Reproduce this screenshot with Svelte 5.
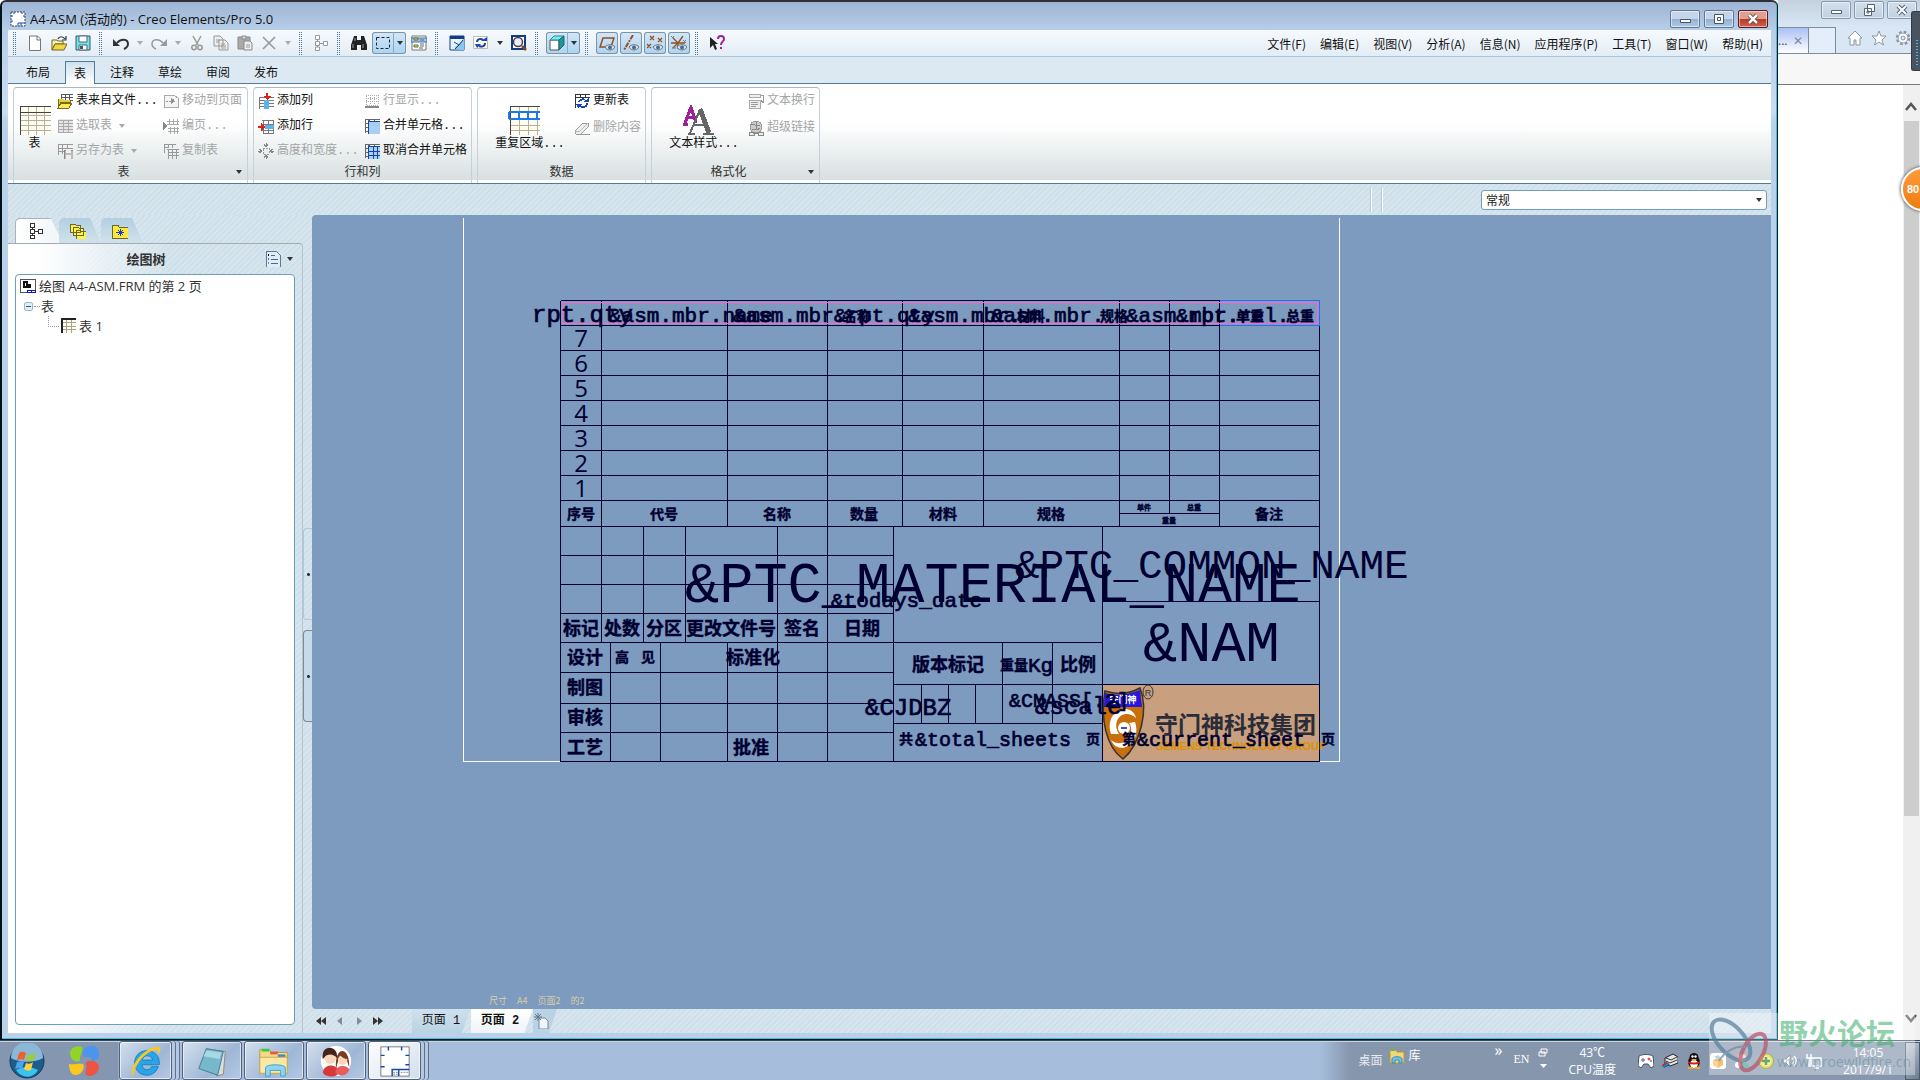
<script lang="ts">
  interface Label {
    x: number;
    y: number;
    size: number;
    text: string;
  }

  const menus = ["文件(F)", "编辑(E)", "视图(V)", "分析(A)", "信息(N)", "应用程序(P)", "工具(T)", "窗口(W)", "帮助(H)"];
  const ribbonTabs = ["布局", "表", "注释", "草绘", "审阅", "发布"];

  let activeTab = $state("表");
  let activePage = $state(2);
  let view = $state("常规");

  // Title block, in pixels from the upper left corner of the parts list.
  const rows = [7, 6, 5, 4, 3, 2, 1];

  // [x1, y1, x2, y2]
  const lines = [
    ...[0, 25, 50, 75, 100, 125, 150, 175, 200, 226].map((y) => [0, y, 759, y]),
    ...[0, 267, 759].map((x) => [x, 0, x, 461]),
    ...[167, 342, 423, 559, 659].map((x) => [x, 0, x, 226]),
    [41, 0, 41, 342],
    [609, 0, 609, 213],
    [559, 213, 659, 213],
    ...[255, 284, 313].map((y) => [0, y, 333, y]),
    ...[83, 125].map((x) => [x, 226, x, 342]),
    [217, 226, 217, 461],
    [333, 226, 333, 461],
    [542, 226, 542, 461],
    [0, 342, 542, 342],
    ...[50, 100, 167].map((x) => [x, 342, x, 461]),
    ...[372, 403, 432].map((y) => [0, y, 333, y]),
    [542, 301, 759, 301],
    [333, 384, 759, 384],
    [333, 423, 542, 423],
    ...[361, 388, 415].map((x) => [x, 384, x, 423]),
    ...[442, 492].map((x) => [x, 342, x, 423]),
    [0, 461, 759, 461],
  ];

  const captions: Label[] = [
    { x: 21, y: 219, size: 14, text: "序号" },
    { x: 104, y: 219, size: 14, text: "代号" },
    { x: 217, y: 219, size: 14, text: "名称" },
    { x: 304, y: 219, size: 14, text: "数量" },
    { x: 383, y: 219, size: 14, text: "材料" },
    { x: 491, y: 219, size: 14, text: "规格" },
    { x: 709, y: 219, size: 14, text: "备注" },
    { x: 584, y: 210, size: 7, text: "单件" },
    { x: 634, y: 210, size: 7, text: "总重" },
    { x: 609, y: 223, size: 7, text: "重量" },
    { x: 21, y: 335, size: 18, text: "标记" },
    { x: 62, y: 335, size: 18, text: "处数" },
    { x: 104, y: 335, size: 18, text: "分区" },
    { x: 171, y: 335, size: 18, text: "更改文件号" },
    { x: 242, y: 335, size: 18, text: "签名" },
    { x: 302, y: 335, size: 18, text: "日期" },
    { x: 25, y: 364, size: 18, text: "设计" },
    { x: 62, y: 362, size: 14, text: "高" },
    { x: 88, y: 362, size: 14, text: "见" },
    { x: 193, y: 364, size: 18, text: "标准化" },
    { x: 25, y: 394, size: 18, text: "制图" },
    { x: 25, y: 424, size: 18, text: "审核" },
    { x: 25, y: 454, size: 18, text: "工艺" },
    { x: 191, y: 454, size: 18, text: "批准" },
    { x: 388, y: 371, size: 18, text: "版本标记" },
    { x: 454, y: 370, size: 14, text: "重量" },
    { x: 518, y: 371, size: 18, text: "比例" },
    { x: 297, y: 21, size: 14, text: "名称" },
    { x: 471, y: 21, size: 14, text: "材料" },
    { x: 554, y: 21, size: 14, text: "规格" },
    { x: 690, y: 21, size: 14, text: "单重" },
    { x: 740, y: 21, size: 14, text: "总重" },
    { x: 346, y: 444, size: 14, text: "共" },
    { x: 533, y: 444, size: 14, text: "页" },
    { x: 569, y: 444, size: 14, text: "第" },
    { x: 768, y: 444, size: 14, text: "页" },
  ];

  const titles: Label[] = [
    { x: 125, y: 302, size: 57, text: "&PTC_MATERIAL_NAME" },
    { x: 455, y: 278, size: 41, text: "&PTC_COMMON_NAME" },
    { x: 583, y: 361, size: 57, text: "&NAM" },
  ];

  const params: Label[] = [
    { x: -28, y: 22, size: 24, text: "rpt.qty" },
    { x: 49, y: 22, size: 21, text: "&asm.mbr.name" },
    { x: 173, y: 22, size: 21, text: "&asm.mbr." },
    { x: 274, y: 22, size: 21, text: "&rpt.qty" },
    { x: 348, y: 22, size: 21, text: "&asm.mbr." },
    { x: 431, y: 22, size: 21, text: "&asm.mbr." },
    { x: 566, y: 22, size: 21, text: "&asm.mbr." },
    { x: 616, y: 22, size: 21, text: "&rpt.rel." },
    { x: 271, y: 307, size: 21, text: "&todays_date" },
    { x: 305, y: 415, size: 24, text: "&CJDBZ" },
    { x: 449, y: 407, size: 20, text: "&CMASS[.2]" },
    { x: 475, y: 414, size: 24, text: "&scale" },
    { x: 468, y: 372, size: 21, text: "Kg" },
    { x: 355, y: 446, size: 20, text: "&total_sheets" },
    { x: 577, y: 446, size: 20, text: "&current_sheet" },
  ];
</script>

{#snippet icon(name: string)}
  <svg class="icon" viewBox="0 0 16 16" aria-hidden="true">
    {#if name === "new"}
      <path d="M2.5 1h8l3 3v11.5h-11z" fill="#fff" stroke="#777" /><path d="M10 1v4h4" fill="none" stroke="#777" />
    {:else if name === "open"}
      <path d="M1 5h5l1 1h5v3H4l-3 6z" fill="#fff7a0" stroke="#6b6530" /><path d="M4 9h12l-3 6H1z" fill="#f2d83c" stroke="#6b6530" />
      <path d="M7 4c1-3 5-3 7 0M15 1v4h-4" fill="none" stroke="#333" stroke-width="1.2" />
    {:else if name === "save"}
      <path d="M1 1h14v14H1z" fill="#68e8ec" stroke="#456" /><path d="M4 1h8v6H4zM4 10h8v5H4z" fill="#fff" stroke="#567" /><path d="M5 11h3v3H5z" fill="#456" />
    {:else if name === "undo"}
      <path d="M4 8C8 3 15 4 15 9c0 3-2 4-4 5" fill="none" stroke="#333" stroke-width="2" /><path d="M0 4v7h7z" fill="#333" />
    {:else if name === "redo"}
      <path d="M12 8C8 3 1 4 1 9c0 3 2 4 4 5" fill="none" stroke="#999" stroke-width="1.5" /><path d="M16 4v7H9z" fill="#999" />
    {:else if name === "cut"}
      <path d="M4 1l5 9M12 1L7 10" stroke="#999" stroke-width="1.5" /><circle cx="5" cy="12.5" r="2.2" fill="none" stroke="#999" stroke-width="1.5" /><circle cx="11" cy="12.5" r="2.2" fill="none" stroke="#999" stroke-width="1.5" />
    {:else if name === "copy"}
      <path d="M1 1h6l3 3v7H1zM6 5h6l3 3v7H6z" fill="#eee" stroke="#999" /><path d="M3 5h4M3 7h3M8 9h4M8 11h5M8 13h5" stroke="#999" />
    {:else if name === "paste"}
      <path d="M1 2h12v12H1z" fill="#aaa" stroke="#888" /><path d="M5 1h4v3H5z" fill="#ddd" stroke="#888" /><path d="M7 6h6l2 2v7H7z" fill="#eee" stroke="#888" /><path d="M9 10h4M9 12h4" stroke="#999" />
    {:else if name === "delete"}
      <path d="M2 2l12 12M14 2L2 14" stroke="#999" stroke-width="1.6" />
    {:else if name === "tree" || name === "tree-dim"}
      <path d="M4.5 4v9M6 8.5h5" stroke={name === "tree" ? "#333" : "#999"} fill="none" />
      <path d="M2.500 .5h4v4h-4zM2.500 6.500h4v4h-4zM2.500 12h4v3.500h-4zM10.500 6.500h4v4h-4z" fill="#fff" stroke={name === "tree" ? "#333" : "#999"} />
    {:else if name === "find"}
      <path d="M3 1h3v4h4V1h3l3 9v5h-6v-5H6v5H0v-5z" fill="#222" /><path d="M2 9v4M12 9v4M4 3v3" stroke="#999" />
    {:else if name === "select"}
      <path d="M1.500 2.500h13v11h-13z" fill="none" stroke="#222" stroke-dasharray="3 2" />
    {:else if name === "filter"}
      <path d="M1 1h14v14H1z" fill="#fff" stroke="#777" /><path d="M0 3h16v4H0z" fill="#9cc6f8" stroke="#47a" /><path d="M3 3h4v2H3zM3 10h4v2H3z" fill="#ee3" stroke="#664" /><path d="M9 5h4M9 9h4M9 11h4M8 13h4" stroke="#666" />
    {:else if name === "repaint"}
      <path d="M1 1h14v14H1z" fill="#e8f4ff" stroke="#123c86" /><path d="M1 1h14v3H1z" fill="#123c86" /><path d="M15 4L5 13l5 2h5z" fill="#8cc4f4" /><path d="M5 7l5 3 4-5M10 10l-4 4" fill="none" stroke="#246" />
    {:else if name === "refresh"}
      <path d="M.5 1.500h14v12H.5z" fill="#fffbe0" stroke="#bbb" /><path d="M4 7c0-3 4-4 6-2M12 8c0 4-4 4-6 3" fill="none" stroke="#1746b8" stroke-width="2" /><path d="M8 6h6V2zM2 9h6l-4 4z" fill="#1746b8" />
    {:else if name === "zoom"}
      <path d="M1 1h13v13H1z" fill="#fff" stroke="#123c86" stroke-width="2" /><circle cx="7" cy="7" r="4.500" fill="#eef" stroke="#444" stroke-width="1.500" /><path d="M11 11l4 4" stroke="#7a4a20" stroke-width="2.500" />
    {:else if name === "solid"}
      <path d="M1 5h9v10H1z" fill="#fff" stroke="#555" /><path d="M1 5l4-4h10l-5 4z" fill="#6ff0f4" stroke="#388" /><path d="M10 5l5-4v9l-5 5z" fill="#18989c" stroke="#266" />
    {:else if name === "plane" || name === "axis" || name === "point" || name === "csys"}
      {#if name === "plane"}<path d="M4 3h11l-3 9H1z" fill="none" stroke="#954f20" stroke-width="1.500" />
      {:else if name === "axis"}<path d="M10 0L1 15" stroke="#954f20" stroke-width="2" stroke-dasharray="5 1 2 1" />
      {:else if name === "point"}<path d="M3 1l4 4M7 1L3 5M11 3l4 4M15 3l-4 4M0 9l4 4M4 9l-4 4" stroke="#954f20" stroke-width="1.300" />
      {:else}<path d="M7 8L2 3M7 8l5-7M7 8l-5 5M0 8h14M7 8v6" stroke="#954f20" stroke-width="1.300" /><path d="M0 1l2 2 1-2M12 5l3 3M15 5l-3 3M1 13h4" fill="none" stroke="#777" />{/if}
      <path d="M6 12c2-3 8-3 10 0-2 4-8 4-10 0z" fill="#dde" stroke="#776" /><circle cx="11" cy="12.500" r="2" fill="#456a9a" />
    {:else if name === "help"}
      <path d="M1 2v11l3-3 2 5 2-1-2-5h3z" fill="#222" /><path d="M9 4c0-4 6-4 6 0 0 3-3 2-3 6M12 12v2" fill="none" stroke="#a0209c" stroke-width="2" />
    {:else if name === "from-file"}
      <path d="M4 1h12v9H4z" fill="#fff" /><path d="M4 1v7M4 1h12M8 1v9M12 1v9M4 4h12M4 7h12" stroke="#555" /><path d="M1 6v9l3-6h9V7" fill="#e8cf38" stroke="#776a20" /><path d="M4 10h11l-3 5H1z" fill="#ffe94e" stroke="#776a20" />
    {:else if name === "grid-dim"}
      <path d="M1 1h15v14H1z" fill="#e6e6e6" /><path d="M1 2h15M1 5.500h15M1 8.500h15M1 11.500h15M1 14.500h15M1.500 2v13M6 2v13M11 2v13" stroke="#aaa" />
    {:else if name === "save-as"}
      <path d="M1 1h15M1 1v11M1 5h15M1 8h7M5 1v10M10 1v4" fill="none" stroke="#999" /><path d="M7 7h9v9H7z" fill="#bbb" stroke="#888" /><path d="M9 7h5v3H9zM9 12h5v4H9z" fill="#eee" />
    {:else if name === "move-page"}
      <path d="M1 2h10l4 3v9H1z" fill="#f4f4f4" stroke="#aaa" /><path d="M3 8h5M8 5v6l4-3z" fill="#888" stroke="#999" stroke-dasharray="2 1" />
    {:else if name === "paginate"}
      <path d="M0 4v8l4-4z" fill="#888" /><path d="M6 1v5M10 1v5M14 1v5M4 3h12M4 6h12M5 10h11M5 13h11M7 9v7M11 9v7M14 9v7" stroke="#aaa" />
    {:else if name === "copy-table"}
      <path d="M1 1h12M1 1v9M1 4h4M5 1v4M9 1v4M4 6h12M5 6v10M5 9h11M5 12h11M9 6v10M13 6v10" stroke="#999" />
    {:else if name === "add-column"}
      <path d="M1 4h15M1 7h15M1 10h15M1 13h15M1.500 4v12" stroke="#777" /><path d="M6 7h5v9H6z" fill="#58b4f0" /><path d="M8 0h2v4H8z" fill="#e02010" /><path d="M5 3h8L9 7z" fill="#e02010" />
    {:else if name === "add-row"}
      <path d="M4 2h12M4 6h12M4 12h12M5 15h11M5 2v13M10 2v13M15 2v13" stroke="#777" /><path d="M7 7h9v4H7z" fill="#58b4f0" /><path d="M0 8h4v2H0z" fill="#e02010" /><path d="M3 5v8l4-4z" fill="#e02010" />
    {:else if name === "resize"}
      <path d="M5 5h6v6H5z" fill="none" stroke="#999" stroke-dasharray="2 1" /><path d="M8 0v4M6 1l2 3 2-3M8 16v-4M6 15l2-3 2 3M0 8h4M1 6l3 2-3 2M16 8h-4M15 6l-3 2 3 2" fill="none" stroke="#888" />
    {:else if name === "row-show"}
      <path d="M2 2h12v10H2zM6 2v10M10 2v10M2 5h12M2 8h12" fill="none" stroke="#aaa" stroke-dasharray="1 1" /><path d="M1 14h14" stroke="#888" stroke-width="1.500" />
    {:else if name === "merge" || name === "unmerge"}
      <path d="M1 1h15M1 1v14M1 5h4M1 9h4M1 13h4M5 1v4M10 1v4M4 1v14" stroke="#666" /><path d="M5 4h11v12H5z" fill="#a9cff6" /><path d="M4 3h12v1H4zM4 3h1v13H4z" fill="#1746a0" />
      {#if name === "unmerge"}<path d="M9 4v12M13 4v12M5 8h11M5 12h11" stroke="#1746a0" />{/if}
    {:else if name === "update"}
      <path d="M1 1h15M1 1v14M1 4h15M6 1v4M11 1v4" stroke="#333" /><path d="M5 9c1-3 5-3 6-2M13 10c0 4-4 5-7 3" fill="none" stroke="#1746b8" stroke-width="2" /><path d="M9 9h6V5zM2 11h6l-4 4z" fill="#1746b8" />
    {:else if name === "erase"}
      <path d="M1 11L9 3h5l1 3-8 8H2z" fill="#eee" stroke="#999" /><path d="M2 14.500h14" stroke="#999" /><path d="M1 11h5l8-8" fill="none" stroke="#bbb" />
    {:else if name === "wrap"}
      <path d="M1 1h11v3H1zM1 7h11v8H1z" fill="#eee" stroke="#aaa" /><path d="M3 9h7M3 11h7M3 13h5" stroke="#999" /><path d="M13 2h2v6M13 7l2 3 1-3" fill="none" stroke="#999" />
    {:else if name === "link"}
      <circle cx="8" cy="7" r="6" fill="#ccc" stroke="#999" /><path d="M3 5c3-3 5 3 9 0M4 10c3-2 5 1 8-2M8 1v9" fill="none" stroke="#888" /><path d="M1 12h5v3H1zM10 12h5v3h-5zM5 13.500h6" fill="#eee" stroke="#888" />
    {:else if name === "layers"}
      <path d="M0 1h5l1 1h4v7H0zM3 4h5l1 1h4v7H3zM6 7h4l1 1h5v8H6z" fill="#fff04a" stroke="#6b6530" />
    {:else if name === "star-folder"}
      <path d="M0 2h6l1 2h9v11H0z" fill="#ffe83c" stroke="#6b6530" /><path d="M8 6v7M4 9.500h8M6 7l5 5M11 7l-5 5" stroke="#1a3cc0" />
    {:else if name === "settings"}
      <path d="M1 0h10l4 4v12H1z" fill="#dcecf8" stroke="#678" /><path d="M6 4h4M6 8h7M6 12h7" stroke="#567" /><circle cx="3.500" cy="4" r="1" /><circle cx="3.500" cy="8" r="1" fill="#47a" /><circle cx="3.500" cy="12" r="1" fill="#88a" />
    {:else if name === "drawing"}
      <path d="M.5 1.500h15v13H.5z" fill="#fff" stroke="#555" /><path d="M4 4v5h6V7H7V4z" fill="none" stroke="#111" stroke-width="1.300" /><path d="M7.500 12.500h8v2h-8zM11.500 12v3" fill="#fff" stroke="#11b" />
    {:else if name === "table"}
      <path d="M1 1h14v14H1z" fill="#fffdf0" /><path d="M1 4.500h14M1 8h14M1 11.500h14M5.500 1v14M10 1v14" stroke="#a8a48c" /><path d="M1 15V1h14" fill="none" stroke="#222" stroke-width="1.500" />
    {:else if name === "new-page"}
      <path d="M6 5h6l3 3v8H6z" fill="#eef5fb" stroke="#789" /><path d="M5 0v8M1 4h8M2 1l6 6M8 1L2 7" stroke="#678" />
    {:else if name === "frame"}
      <path d="M1 1h14v14H1z" fill="#fff" stroke="#345" stroke-dasharray="2 1" /><path d="M4 1v2M12 1v2M1 5h2M1 10h2M15 5h-2M8 15v-3h7M11 12v3" fill="none" stroke="#1746b8" />
    {:else if name === "home"}
      <path d="M8 1L1 8h2v7h4v-5h2v5h4V8h2z" fill="#fff" stroke="#8a97a6" />
    {:else if name === "star"}
      <path d="M8 1l2 5h5l-4 4 1.500 5L8 12l-4.500 3L5 10 1 6h5z" fill="#fff" stroke="#8a97a6" />
    {:else if name === "gear"}
      <circle cx="8" cy="8" r="6" fill="#fff" stroke="#8a97a6" stroke-width="2.500" stroke-dasharray="2.700 2" /><circle cx="8" cy="8" r="5" fill="#fff" stroke="#8a97a6" /><circle cx="8" cy="8" r="2" fill="#dde8f4" stroke="#8a97a6" />
    {:else if name === "folder"}
      <path d="M1 2h6l1 2h7v11H1z" fill="#f0d878" stroke="#b89838" /><path d="M3 15v-4c0-3 10-3 10 0v4h-3v-3H6v3z" fill="#6cc4ec" stroke="#3888b8" /><path d="M2 2h4v1H2z" fill="#3c4" />
    {:else if name === "gamepad"}
      <path d="M1 3c4-2 10-2 14 0l1 10-3 2-3-4H6l-3 4-3-2z" fill="#fff" stroke="#456" /><path d="M3 7h4M5 5v4" stroke="#46a" /><circle cx="11" cy="6" r="1.500" fill="#e54" /><circle cx="13" cy="8" r="1" fill="#3a6" />
    {:else if name === "scanner"}
      <path d="M3 5l8-4 5 3v6l-8 3-5-2z" fill="#e8e8e8" stroke="#222" /><path d="M4 5l5 2 6-3M4 8l4 2 7-3" fill="none" stroke="#333" /><path d="M0 13l5-4 3 3-6 3z" fill="#1a58e0" /><path d="M0 13l5-4" stroke="#e02020" stroke-width="1.500" /><path d="M1 14l6-4" stroke="#20c040" />
    {:else if name === "penguin"}
      <ellipse cx="8" cy="9" rx="6" ry="6" fill="#111" /><circle cx="8" cy="4.500" r="4.500" fill="#111" /><ellipse cx="8" cy="11" rx="3.800" ry="4" fill="#fff" /><path d="M2 8c4 2 8 2 12 0v2c-4 2-8 2-12 0z" fill="#e01818" /><circle cx="6.500" cy="3.500" r="1.200" fill="#fff" /><circle cx="9.500" cy="3.500" r="1.200" fill="#fff" /><path d="M5 6h6l-3 2zM2 14h5v2H2zM9 14h5v2H9z" fill="#f8a818" />
    {:else if name === "cube"}
      <rect width="16" height="16" rx="3" fill="#fff" /><path d="M3 7l5-2 5 2v5l-5 3-5-3z" fill="#f0a030" /><path d="M3 7l5 2v6l-5-3z" fill="#f8c060" /><path d="M4 4l4-2 3 3-3 1z" fill="#7cc4f0" />
    {:else if name === "mouse"}
      <circle cx="4" cy="3" r="2.500" fill="#b89088" /><circle cx="12" cy="3" r="2.500" fill="#b89088" /><circle cx="8" cy="5" r="4" fill="#e8d0c4" /><path d="M2 15c0-8 12-8 14 0z" fill="#4aa098" /><circle cx="4" cy="12" r="3" fill="#fff" />
    {:else if name === "shield-plus"}
      <circle cx="8" cy="8" r="7.500" fill="#f0d020" stroke="#4a9a30" /><circle cx="8" cy="8" r="5" fill="#e8f080" /><path d="M8 4v8M4 8h8" stroke="#247a20" stroke-width="2.500" />
    {:else if name === "speaker"}
      <path d="M1 6h3l4-4v12l-4-4H1z" fill="#fff" stroke="#678" /><path d="M10 5c2 2 2 4 0 6M12 3c3 3 3 7 0 10" fill="none" stroke="#fff" stroke-width="1.500" />
    {:else if name === "network"}
      <path d="M5 5h10v8H5zM8 15h5" fill="#8ea2bc" stroke="#fff" stroke-width="1.500" /><path d="M1 1v4h4V1M3 5v8h3" fill="none" stroke="#fff" stroke-width="1.500" />
    {/if}
  </svg>
{/snippet}

{#snippet tool(name: string, label: string)}
  <button class="tool" aria-label={label} title={label}>{@render icon(name)}</button>
{/snippet}

{#snippet drop(label: string, dim: boolean)}
  <button class="drop" class:dim aria-label={label}><i class="caret"></i></button>
{/snippet}

{#snippet command(name: string, label: string, dim: boolean, menu: boolean)}
  <button class="command" class:dim>
    {@render icon(name)}<span>{label}</span>{#if menu}<i class="caret"></i>{/if}
  </button>
{/snippet}

<div class="desktop">
  <div class="windows">
    <main class="creo">
      <header class="titlebar">
        {@render icon("frame")}
        <h1>A4-ASM (活动的) - Creo Elements/Pro 5.0</h1>
        <button class="sys" aria-label="最小化"><svg viewBox="0 0 28 16"><path d="M9.500 8.500h10v3h-10z" fill="#fff" stroke="#456" /></svg></button>
        <button class="sys" aria-label="还原"><svg viewBox="0 0 28 16"><path d="M9.500 3.500h9v9h-9zM12.500 6.500h3v3h-3z" fill="#fff" stroke="#456" /></svg></button>
        <button class="sys close" aria-label="关闭"><svg viewBox="0 0 28 16"><path d="M10 4l8 8M18 4l-8 8" stroke="#533" stroke-width="4" /><path d="M10 4l8 8M18 4l-8 8" stroke="#fff" stroke-width="2.500" /></svg></button>
      </header>

      <div class="client">
        <div class="toolbar">
          <i class="grip"></i>
          {@render tool("new", "新建")}
          {@render tool("open", "打开")}
          {@render tool("save", "保存")}
          <i class="grip"></i>
          {@render tool("undo", "撤消")}
          {@render drop("撤消列表", true)}
          {@render tool("redo", "重做")}
          {@render drop("重做列表", true)}
          {@render tool("cut", "剪切")}
          {@render tool("copy", "复制")}
          {@render tool("paste", "粘贴")}
          {@render tool("delete", "删除")}
          {@render drop("删除选项", true)}
          <i class="grip"></i>
          {@render tool("tree-dim", "模型树")}
          <i class="grip"></i>
          {@render tool("find", "查找")}
          <span class="split">{@render tool("select", "选取")}{@render drop("选取方式", false)}</span>
          {@render tool("filter", "树过滤器")}
          <i class="grip"></i>
          {@render tool("repaint", "重画")}
          {@render tool("refresh", "更新")}
          {@render drop("更新选项", false)}
          {@render tool("zoom", "重新调整")}
          <i class="grip"></i>
          <span class="split">{@render tool("solid", "着色")}{@render drop("显示样式", false)}</span>
          <i class="grip"></i>
          <span class="toggles">
            {@render tool("plane", "平面显示")}
            {@render tool("axis", "轴显示")}
            {@render tool("point", "点显示")}
            {@render tool("csys", "坐标系显示")}
          </span>
          <i class="grip"></i>
          {@render tool("help", "上下文帮助")}
          <nav class="menubar">
            {#each menus as menu}
              <button>{menu}</button>
            {/each}
          </nav>
        </div>

        <div class="ribbon-tabs" role="tablist">
          {#each ribbonTabs as tab}
            <button role="tab" aria-selected={activeTab === tab} class:active={activeTab === tab} onclick={() => (activeTab = tab)}>{tab}</button>
          {/each}
        </div>

        <div class="ribbon">
          <section class="group tables">
            <div class="group-body">
              <button class="big">
                <svg width="32" height="30" viewBox="0 0 32 30"><path d="M1 1h30v28H1z" fill="#fffdf0" /><path d="M1 10h31M1 15h31M1 20h31M1 25h31M9 1v29M17 1v29M25 1v29" stroke="#b4b09c" /><path d="M1 30V1h31M1 7h31" fill="none" stroke="#444" /></svg>
                <span>表</span>
              </button>
              <div class="stack">
                {@render command("from-file", "表来自文件...", false, false)}
                {@render command("grid-dim", "选取表", true, true)}
                {@render command("save-as", "另存为表", true, true)}
              </div>
              <div class="stack">
                {@render command("move-page", "移动到页面", true, false)}
                {@render command("paginate", "编页...", true, false)}
                {@render command("copy-table", "复制表", true, false)}
              </div>
            </div>
            <h2>表</h2>
            <button class="launcher" aria-label="表选项"><i class="caret"></i></button>
          </section>

          <section class="group rows">
            <div class="group-body">
              <div class="stack">
                {@render command("add-column", "添加列", false, false)}
                {@render command("add-row", "添加行", false, false)}
                {@render command("resize", "高度和宽度...", true, false)}
              </div>
              <div class="stack">
                {@render command("row-show", "行显示...", true, false)}
                {@render command("merge", "合并单元格...", false, false)}
                {@render command("unmerge", "取消合并单元格", false, false)}
              </div>
            </div>
            <h2>行和列</h2>
          </section>

          <section class="group data">
            <div class="group-body">
              <button class="big">
                <svg width="32" height="30" viewBox="0 0 32 30"><path d="M2 1h30v28H2z" fill="#fffdf0" /><path d="M2 20h30M2 25h30M11 1v29M20 1v29M29 1v29" stroke="#b4b09c" /><path d="M2 30V1h30" fill="none" stroke="#444" /><path d="M1 7h31M1 14h31M1 7v7M11 7v7M20 7v7M29 7v7" stroke="#1a78e8" stroke-width="2" /></svg>
                <span>重复区域...</span>
              </button>
              <div class="stack pair">
                {@render command("update", "更新表", false, false)}
                {@render command("erase", "删除内容", true, false)}
              </div>
            </div>
            <h2>数据</h2>
          </section>

          <section class="group format">
            <div class="group-body">
              <button class="big">
                <svg width="32" height="30" viewBox="0 0 32 30"><path d="M3 18L9 2l5 16M6 12h7M1 19h5" fill="none" stroke="#a0209c" stroke-width="3" /><path d="M8 28L18 5M12 20h11" fill="none" stroke="#666" stroke-width="2" /><path d="M18 4l9 24" fill="none" stroke="#666" stroke-width="5" /><path d="M6 29h7M21 29h11" stroke="#666" stroke-width="2" /></svg>
                <span>文本样式...</span>
              </button>
              <div class="stack pair">
                {@render command("wrap", "文本换行", true, false)}
                {@render command("link", "超级链接", true, false)}
              </div>
            </div>
            <h2>格式化</h2>
            <button class="launcher" aria-label="格式化选项"><i class="caret"></i></button>
          </section>
        </div>

        <div class="filterbar">
          <i class="rule"></i><i class="rule"></i>
          <label class="picker">
            <select bind:value={view} aria-label="选取过滤器">
              <option>常规</option>
            </select>
            <i class="caret"></i>
          </label>
        </div>

        <div class="work">
          <aside class="navigator">
            <div class="nav-tabs">
              <button class="active" aria-label="绘图树">{@render icon("tree")}</button>
              <button aria-label="层树">{@render icon("layers")}</button>
              <button aria-label="收藏夹">{@render icon("star-folder")}</button>
            </div>
            <div class="panel">
              <div class="panel-head">
                <h2>绘图树</h2>
                <button aria-label="设置">{@render icon("settings")}<i class="caret"></i></button>
              </div>
              <ul class="tree">
                <li>{@render icon("drawing")}<span>绘图 A4-ASM.FRM 的第 2 页</span></li>
                <li class="branch"><button class="expander" aria-label="折叠"></button><i class="twig"></i><span>表</span></li>
                <li class="leaf"><i class="elbow"></i>{@render icon("table")}<span>表 1</span></li>
              </ul>
            </div>
          </aside>

          <div class="sash">
            <button aria-label="折叠导航器"></button>
            <button class="sunk" aria-label="折叠浏览器"></button>
          </div>

          <div class="sheet">
            <svg class="canvas" role="img" aria-label="A4-ASM">
              <g transform="translate(248 85)" shape-rendering="crispEdges">
                <path d="M-96.500-82V461.500H779.500V-82" fill="none" stroke="#fff" />
                <rect x="542" y="384" width="217" height="77" fill="#c8a080" />
                {#each lines as [x1, y1, x2, y2]}
                  <line x1={x1 + 0.5} y1={y1 + 0.5} x2={x2 + 0.5} y2={y2 + 0.5} stroke="#000030" />
                {/each}
                <path d="M659.500.5h100v25h-100" fill="none" stroke="#3366ff" />
                <rect x="2.500" y="2.500" width="755" height="21" fill="none" stroke="#ff66cc" />
              </g>
              <g transform="translate(248 85)">
                <g class="brand">
                  <path d="M545 391c12 4 24 3 35-3 9 22 0 57-17 71-17-12-23-41-18-68z" fill="#c9700c" stroke="#333" stroke-width="1.500" />
                  <path d="M545 393c12 3 23 2 35-3l2 17h-38z" fill="#2418dc" />
                  <path d="M551 434c-4-13 2-24 14-25 6 0 10 4 11 9-6-6-15-5-18 1-3 5-2 10 1 15zM575 422c4 12-1 23-12 26-6 0-10-3-12-8 6 5 14 4 18-2 3-5 3-11 0-15z" fill="#fff" />
                  <circle cx="564" cy="428" r="6" fill="#fff" />
                  <path d="M561 428h6" stroke="#35c" stroke-width="2" />
                  <text x="563" y="403" class="mark" text-anchor="middle">守门神</text>
                  <ellipse cx="588" cy="392" rx="5" ry="7" fill="none" stroke="#333" />
                  <text x="588" y="396" class="reg" text-anchor="middle">R</text>
                  <text x="595" y="433" class="cn">守门神科技集团</text>
                  <text x="596" y="450" class="en">SEMENS TECHNOLOGY GROUP</text>
                </g>
                {#each rows as row, i}
                  <text class="count" x="21" y={47 + i * 25} font-size="24" text-anchor="middle">{row}</text>
                {/each}
                {#each captions as { x, y, size, text }}
                  <text class="caption" {x} {y} font-size={size} text-anchor="middle">{text}</text>
                {/each}
                {#each titles as { x, y, size, text }}
                  <text class="plot" {x} {y} font-size={size}>{text}</text>
                {/each}
                {#each params as { x, y, size, text }}
                  <text class="plot heavy" {x} {y} font-size={size}>{text}</text>
                {/each}
              </g>
            </svg>
            <p class="note"><span>尺寸</span><span>A4</span><span>页面2</span><span>的2</span></p>
          </div>

          <div class="pagebar">
            <button class="step" aria-label="第一页"><svg viewBox="0 0 12 10"><path d="M6 1v8L1 5zM11 1v8L6 5z" fill="#333" /></svg></button>
            <button class="step" aria-label="上一页"><svg viewBox="0 0 12 10"><path d="M8 1v8L3 5z" fill="#889" /></svg></button>
            <button class="step" aria-label="下一页"><svg viewBox="0 0 12 10"><path d="M4 1v8l5-4z" fill="#889" /></svg></button>
            <button class="step" aria-label="最后一页"><svg viewBox="0 0 12 10"><path d="M1 1v8l5-4zM6 1v8l5-4z" fill="#333" /></svg></button>
            {#each [1, 2] as page}
              <button class="page" class:active={activePage === page} onclick={() => (activePage = page)}>页面 {page}</button>
            {/each}
            <button class="add" aria-label="新页面">{@render icon("new-page")}</button>
          </div>
        </div>
      </div>
    </main>

    <div class="browser">
      <div class="browser-title">
        <button class="sys" aria-label="最小化"><svg viewBox="0 0 28 16"><path d="M9.500 8.500h10v3h-10z" fill="#fff" stroke="#567" /></svg></button>
        <button class="sys" aria-label="还原"><svg viewBox="0 0 28 16"><path d="M12.500 2.500h7v7h-7zM9.500 6.500h7v7h-7zM12 9h2v2h-2z" fill="#fff" stroke="#567" /></svg></button>
        <button class="sys" aria-label="关闭"><svg viewBox="0 0 28 16"><path d="M10 4l8 8M18 4l-8 8" stroke="#567" stroke-width="4" /><path d="M10 4l8 8M18 4l-8 8" stroke="#fff" stroke-width="2" /></svg></button>
      </div>
      <div class="browser-tabs">
        <div class="browser-tab"><span>...</span><button aria-label="关闭标签页">✕</button></div>
        <button class="blank-tab" aria-label="新标签页"></button>
        {@render tool("home", "主页")}
        {@render tool("star", "收藏夹")}
        {@render tool("gear", "工具")}
      </div>
      <div class="browser-bar"></div>
      <div class="browser-page">
        <div class="scrollbar">
          <svg viewBox="0 0 16 16"><path d="M3 11l5-6 5 6" fill="none" stroke="#555" stroke-width="2.500" /></svg>
          <i class="thumb"></i>
          <svg viewBox="0 0 16 16"><path d="M3 5l5 6 5-6" fill="none" stroke="#555" stroke-width="2.500" /></svg>
        </div>
      </div>
      <div class="meter"></div>
      <div class="ball">80</div>
    </div>
  </div>

  <footer class="taskbar">
    <button class="launch" aria-label="开始">
      <svg viewBox="0 0 36 36"><circle cx="18" cy="18" r="17" fill="#1d5c8c" stroke="#123a5c" /><path d="M2 15a16 16 0 0 1 32 0c-8 5-24 5-32 0z" fill="#8cb8d8" /><path d="M7 27c6 9 17 9 22 0-8-4-14-4-22 0z" fill="#38c4ec" /><path d="M10 10c3-2 5-1 7 0l-2 7c-2-1-4-1-7 0z" fill="#f0602c" /><path d="M19 11c3 1 5 1 8-1l-2 7c-3 2-5 1-8 0z" fill="#9ccc3c" /><path d="M8 19c3-1 5-1 7 0l-2 7c-2-1-4-1-7 0z" fill="#4ca4ec" /><path d="M17 20c2 1 5 1 7-1l-2 8c-2 1-4 1-7-1z" fill="#ffd03c" /></svg>
    </button>
    <button class="launch" aria-label="软件管家">
      <svg viewBox="0 0 36 36"><path d="M4 10c0-6 9-8 12-6 2 3-3 8-2 14-6 2-10-3-10-8z" fill="#90d428" /><path d="M17 10c0-9 15-10 16-1 1 5-2 9-6 9-2-5-6-4-8-4-2-1-2-2-2-4z" fill="#4c94ec" /><path d="M3 21c6 1 10-1 14 0 3 5-3 12-8 11-4 0-6-6-6-11z" fill="#fcc820" /><path d="M20 19c7-3 12 0 13 5 0 6-7 11-13 8-2-3 2-7 0-13z" fill="#ec5444" /></svg>
    </button>
    <button class="task stacked" aria-label="Internet Explorer">
      <svg viewBox="0 0 36 36"><path d="M31 24c-2 6-7 9-12 9-8 0-13-6-13-13S11 7 19 7s14 6 13 15H14c0 6 8 7 10 2zM14 17h11c-1-6-10-6-11 0z" fill="#2aa4e8" stroke="#1880c4" /><path d="M4 34C-2 28 14 4 30 3c5 0 3 6 1 8 1-6-3-5-8-3C13 13 6 24 4 34z" fill="#f8c820" /></svg>
    </button>
    <button class="task" aria-label="记事本">
      <svg viewBox="0 0 36 36"><path d="M12 5l20 3-2 24-7 2z" fill="#ddd" stroke="#888" /><path d="M12 5l18 3-6 25-20-7z" fill="#78b8cc" stroke="#48788c" /><path d="M12 7l16 2-2 7-17-3z" fill="#a8d8e4" /></svg>
    </button>
    <button class="task" aria-label="资源管理器">
      <svg viewBox="0 0 36 36"><path d="M3 6h10l2 3h17v22H3z" fill="#f4dc84" stroke="#b8983c" /><path d="M5 5h8v3H5z" fill="#3c4" /><path d="M14 8h8v3h-8z" fill="#e54" /><path d="M22 11h8v3h-8z" fill="#48c" /><path d="M3 14h29v17H3z" fill="#fae8a4" stroke="#c8a850" /><path d="M9 34V25c0-4 21-4 21 0v9h-5v-6H14v6z" fill="#8cd4f4" stroke="#48a0c8" /></svg>
    </button>
    <button class="task" aria-label="联系人">
      <svg viewBox="0 0 36 36"><circle cx="18" cy="18" r="16" fill="#fff" /><path d="M4 30c2-10 14-9 18-1-2 7-16 7-18 1z" fill="#d83838" /><path d="M17 30c2-9 13-8 15-3-2 6-9 9-15 3z" fill="#e85c5c" /><circle cx="12" cy="15" r="6" fill="#f8d4b8" /><path d="M4 16C1 0 21 0 19 15c-3-5-11-5-13-1z" fill="#442418" /><path d="M18 26C16 1 33 2 32 25l-3-9c-4 0-6-2-7-4z" fill="#7c3c24" /><circle cx="25" cy="17" r="5" fill="#f8d4b8" /><path d="M19 15c2-7 11-7 12 1-5 0-7-2-8-4z" fill="#7c3c24" /></svg>
    </button>
    <button class="task stacked current" aria-label="Creo Elements/Pro">
      <svg viewBox="0 0 36 36"><path d="M3 3h30v31H3z" fill="#fff" stroke="#777" /><path d="M11 3v4M25 3v4M3 12h4M3 24h4M33 12h-4M33 22h-4M15 34v-7h18M22 27v7" fill="none" stroke="#1746a8" stroke-width="1.500" /><path d="M16 30h5M24 30h8M16 32h5" stroke="#888" stroke-dasharray="2 1" /></svg>
    </button>

    <div class="tray">
      <span class="desk">桌面</span>
      <span class="library">{@render icon("folder")}库</span>
      <span class="more">»</span>
      <span class="lang">EN</span>
      <span class="float"><svg viewBox="0 0 10 22"><path d="M3 1h6v4H3zM1 4h6v4H1z" fill="#8596ad" stroke="#fff" /><path d="M2 16h7l-3.500 4z" fill="#fff" /></svg></span>
      <span class="temp"><b>43℃</b><b>CPU温度</b></span>
      {#each ["gamepad", "scanner", "penguin", "cube", "mouse", "shield-plus", "speaker", "network"] as name}
        {@render icon(name)}
      {/each}
      <time class="clock"><b>14:05</b><b>2017/9/1</b></time>
      <button class="show-desktop" aria-label="显示桌面"></button>
    </div>
  </footer>

  <div class="watermark">
    <svg viewBox="0 0 206 62">
      <ellipse cx="22" cy="27" rx="13" ry="25" transform="rotate(-42 22 27)" fill="none" stroke="#567f9c" stroke-width="4" />
      <ellipse cx="44" cy="39" rx="10" ry="20" transform="rotate(28 44 39)" fill="none" stroke="#b85068" stroke-width="4" />
      <path d="M10 48c6-10 18-16 26-14" fill="none" stroke="#789" stroke-width="2" />
    </svg>
    <strong>野火论坛</strong>
    <em>www.proewildfire.cn</em>
  </div>
</div>

<style>
  :global(body) {
    margin: 0;
  }

  .desktop {
    --line: #4d7d9b;
    --hatch: repeating-linear-gradient(135deg, #cfe0ea 0 2px, #d7e5ee 2px 4px);
    position: relative;
    display: flex;
    flex-direction: column;
    min-height: 100vh;
    overflow: hidden;
    font: 12px/16px "Open Sans", "Noto Sans CJK SC", sans-serif;
    color: #111;
  }

  button {
    padding: 0;
    border: 0;
    background: none;
    font: inherit;
    color: inherit;
  }

  h1,
  h2,
  p,
  ul {
    margin: 0;
    padding: 0;
    font: inherit;
    list-style: none;
  }

  .icon {
    flex: none;
    display: block;
    width: 16px;
    height: 16px;
  }

  .ribbon svg,
  .tree .icon,
  .panel-head .icon,
  .nav-tabs .icon {
    shape-rendering: crispEdges;
  }

  .caret {
    flex: none;
    border: 3px solid transparent;
    border-top: 4px solid #333;
    border-bottom: 0;
  }

  .dim .caret {
    border-top-color: #aaa;
  }

  .windows {
    flex: 1;
    display: flex;
    overflow: hidden;
  }

  .creo {
    flex: 1;
    display: flex;
    flex-direction: column;
    min-width: 0;
    padding: 0 6px 6px;
    border: 1px solid #00121a;
    border-top: 2px solid #303038;
    border-left-width: 2px;
    border-radius: 6px 6px 0 0;
    box-shadow: inset -1px -1px #35c4e0;
    background: linear-gradient(#9db5d3, #b7cee9 28px, #cbdcf0 110px, #b9d1ea 120px);
  }

  .titlebar {
    display: flex;
    align-items: center;
    gap: 4px;
    height: 28px;
    padding: 5px 3px 0 2px;
    box-sizing: border-box;
  }

  .titlebar h1 {
    flex: 1;
    font-size: 13px;
  }

  .sys {
    width: 30px;
    height: 18px;
    border: 1px solid #5f7894;
    border-radius: 2px;
    background: linear-gradient(#c3d5e9 50%, #94b0d0 50%, #aecae6);
    box-shadow: inset 0 0 0 1px #ffffff80;
  }

  .sys svg {
    display: block;
    width: 28px;
    height: 16px;
  }

  .sys.close {
    border-color: #5a1820;
    background: linear-gradient(#e0a090 50%, #b83820 50%, #cc6450);
  }

  .client {
    flex: 1;
    display: flex;
    flex-direction: column;
    background: #dce9f3;
  }

  .toolbar {
    display: flex;
    align-items: center;
    height: 26px;
    padding-left: 1px;
    border-bottom: 1px solid #a9c3d8;
    background: linear-gradient(#f6fafd, #e3edf5);
  }

  .grip {
    width: 3px;
    height: 23px;
    margin: 0 7px 0 4px;
    background: linear-gradient(#e9f1f8, #e9f1f8) 1px 0 / 1px 100% no-repeat, repeating-linear-gradient(#537b96 0 1px, #e9f1f8 1px 2px);
  }

  .tool {
    display: flex;
    align-items: center;
    justify-content: center;
    width: 24px;
    height: 22px;
  }

  .drop {
    display: flex;
    align-items: center;
    justify-content: center;
    width: 14px;
    height: 22px;
  }

  .split {
    display: flex;
    margin: 0 1px;
    border-radius: 3px;
    box-shadow: inset 0 0 0 1px #7d94a8;
    background: linear-gradient(#d5e7f5, #a9d4f5);
  }

  .split .tool {
    width: 22px;
    border-right: 1px solid #8fa9be;
  }

  .split .drop {
    width: 12px;
  }

  .toggles {
    display: flex;
    gap: 2px;
    padding: 0 1px;
  }

  .toggles .tool {
    width: 22px;
    border-radius: 3px;
    box-shadow: inset 0 0 0 1px #7d94a8;
    background: linear-gradient(#d5e7f5, #a9d4f5);
  }

  .menubar {
    display: flex;
    gap: 14px;
    margin-left: auto;
    padding: 2px 8px 0 0;
    font-family: "Noto Sans CJK SC", sans-serif;
  }

  .ribbon-tabs {
    display: flex;
    height: 26px;
    padding-left: 6px;
    border-bottom: 1px solid var(--line);
    font-family: "Noto Sans CJK SC", sans-serif;
  }

  .ribbon-tabs button {
    padding: 3px 12px 0;
    height: 27px;
  }

  .ribbon-tabs .active {
    margin: 4px 3px 0;
    height: 23px;
    padding: 0 8px;
    border: 1px solid var(--line);
    border-bottom: 0;
    background: linear-gradient(#cfe0ec, #fff);
  }

  .ribbon {
    display: flex;
    gap: 5px;
    padding: 3px 5px 0;
    border-bottom: 1px solid var(--line);
    box-shadow: inset 0 -3px #fff;
    background: linear-gradient(#fff 40%, #d5dedf);
    font-family: "Liberation Mono", "Noto Sans CJK SC", monospace;
  }

  .group {
    position: relative;
    display: flex;
    flex-direction: column;
    box-sizing: border-box;
    height: 96px;
    border: 1px solid #c4d1da;
    border-top-color: #a3b9c8;
    border-bottom: 0;
    border-radius: 4px 4px 0 0;
  }

  .tables {
    width: 235px;
  }

  .rows {
    width: 219px;
  }

  .data,
  .format {
    width: 169px;
  }

  .group h2 {
    height: 18px;
    color: #333;
    text-align: center;
  }

  .format h2,
  .tables h2 {
    padding-right: 14px;
  }

  .group-body {
    flex: 1;
    display: grid;
    grid-template-columns: 43px 106px 1fr;
    white-space: nowrap;
  }

  .rows .group-body {
    grid-template-columns: 106px 1fr;
    padding-left: 4px;
  }

  .data .group-body,
  .format .group-body {
    grid-template-columns: 96px 1fr;
  }

  .data .big,
  .format .big {
    padding-left: 10px;
  }

  .data .big svg,
  .format .big svg {
    margin-right: 12px;
  }

  .big {
    display: flex;
    flex-direction: column;
    align-items: center;
    gap: 1px;
    padding: 17px 2px 0 0;
  }

  .stack {
    display: flex;
    flex-direction: column;
    gap: 9px;
    padding-top: 5px;
  }

  .pair {
    gap: 11px;
  }

  .command {
    display: flex;
    align-items: center;
    gap: 3px;
    height: 16px;
  }

  .command .caret {
    margin-left: 4px;
  }

  .command.dim {
    color: #a2a5a6;
  }

  .launcher {
    position: absolute;
    right: 5px;
    bottom: 9px;
    display: flex;
  }

  .filterbar {
    display: flex;
    align-items: center;
    justify-content: flex-end;
    height: 31px;
    padding-right: 4px;
    background: var(--hatch);
  }

  .rule {
    width: 1px;
    height: 24px;
    margin-right: 10px;
    background: #fff;
    box-shadow: -1px 0 #b8cad6;
  }

  .rule + .rule {
    margin-right: 98px;
  }

  .picker {
    position: relative;
    display: flex;
    width: 286px;
  }

  .picker select {
    flex: 1;
    height: 20px;
    padding: 0 4px;
    appearance: none;
    border: 1px solid #6f9fbc;
    border-radius: 3px;
    background: #fff;
    font: 12px/16px "Noto Sans CJK SC", sans-serif;
    color: #222;
  }

  .picker .caret {
    position: absolute;
    right: 5px;
    top: 8px;
  }

  .work {
    flex: 1;
    display: grid;
    grid-template: 1fr 24px / 295px 9px 1fr;
    background: var(--hatch);
  }

  .navigator {
    grid-row: 1 / 3;
    display: flex;
    flex-direction: column;
  }

  .nav-tabs {
    display: flex;
    height: 25px;
    padding: 3px 0 0 7px;
  }

  .nav-tabs button {
    display: flex;
    align-items: center;
    justify-content: center;
    width: 42px;
    padding-right: 4px;
    clip-path: polygon(0 0, 74% 0, 100% 100%, 0 100%);
    background: linear-gradient(#b3cfe1, #d0e1ec);
    border-radius: 5px 0 0;
  }

  .nav-tabs .active {
    width: 48px;
    margin-right: -4px;
    background: linear-gradient(90deg, #fff, #f0f5f9);
    border-top: 1px solid #aab4b8;
    border-left: 1px solid #aab4b8;
    box-sizing: border-box;
    padding-right: 8px;
  }

  .panel {
    flex: 1;
    display: flex;
    flex-direction: column;
    padding: 0 7px 8px;
    border-top: 1px solid #a3adb0;
    border-right: 1px solid #b6c4cc;
    border-radius: 0 4px 0 0;
    background: linear-gradient(90deg, #fff 10%, #ffffff00 55%);
  }

  .panel-head {
    display: flex;
    align-items: center;
    height: 30px;
  }

  .panel-head h2 {
    flex: 1;
    padding-left: 54px;
    font: 700 13px/16px "Noto Sans CJK SC", sans-serif;
    color: #333;
    text-align: center;
  }

  .panel-head button {
    display: flex;
    align-items: center;
    gap: 6px;
    margin-left: 42px;
    padding-right: 2px;
  }

  .tree {
    flex: 1;
    padding: 1px 4px;
    border: 1px solid #6e9fb8;
    border-radius: 4px;
    background: #fff;
    font-size: 13px;
    color: #333;
  }

  .tree li {
    display: flex;
    align-items: center;
    gap: 3px;
    height: 20px;
  }

  .tree .branch {
    gap: 1px;
    padding-left: 4px;
  }

  .tree .leaf {
    padding-left: 28px;
    gap: 2px;
  }

  .expander {
    width: 9px;
    height: 9px;
    border: 1px solid #9ab8cc;
    border-radius: 2px;
    background: linear-gradient(#456, #456) center / 5px 1px no-repeat #e0eef8;
  }

  .twig {
    width: 6px;
    border-top: 1px dotted #999;
  }

  .elbow {
    width: 10px;
    height: 10px;
    margin-bottom: 9px;
    border: 1px dotted #999;
    border-width: 0 0 1px 1px;
  }

  .sash {
    grid-row: 1 / 3;
    display: flex;
    flex-direction: column;
    justify-content: center;
    gap: 10px;
    padding-top: 2px;
  }

  .sash button {
    height: 92px;
    border: 1px solid #a9cbdd;
    border-right: 0;
    border-radius: 4px 0 0 4px;
    background: radial-gradient(#234 1px, transparent 2px) center / 5px 5px no-repeat;
  }

  .sash .sunk {
    border-color: #7d8a92;
    background-color: #c6dbe8;
  }

  .sheet {
    position: relative;
    border-radius: 4px 0 0 4px;
    background: #7d9abf;
    overflow: hidden;
  }

  .canvas {
    position: absolute;
    width: 100%;
    height: 100%;
  }

  .plot {
    fill: #000030;
    font-family: "Liberation Mono", monospace;
  }

  .heavy {
    stroke: #000030;
    stroke-width: 0.7px;
  }

  .count {
    fill: #000030;
    font-family: "Open Sans", sans-serif;
  }

  .caption {
    fill: #000030;
    stroke: #000030;
    stroke-width: 0.4px;
    font-family: "Noto Sans CJK SC", sans-serif;
    font-weight: 700;
  }

  .mark {
    fill: #fff;
    font: 700 9px "Noto Sans CJK SC", sans-serif;
  }

  .reg {
    fill: #333;
    font: 9px "Liberation Sans", sans-serif;
  }

  .cn {
    fill: #2a2c38;
    font: 700 23px "Noto Sans CJK SC", sans-serif;
  }

  .en {
    fill: #dc9000;
    font: 700 11px "Liberation Sans", sans-serif;
  }

  .note {
    position: absolute;
    left: 177px;
    bottom: 0;
    display: flex;
    gap: 10px;
    font: 9px/16px "Noto Sans CJK SC", sans-serif;
    color: #dccfa4;
  }

  .pagebar {
    display: flex;
    align-items: center;
    padding-left: 3px;
    font-family: "Liberation Mono", "Noto Sans CJK SC", monospace;
  }

  .step {
    width: 12px;
    height: 10px;
    margin-right: 7px;
  }

  .step svg {
    display: block;
  }

  .page {
    height: 24px;
    width: 58px;
    margin-left: 1px;
    background: linear-gradient(#cfe0ec, #b9d3e4);
    clip-path: polygon(0 0, 100% 0, 86% 100%, 0 100%);
  }

  .step + .page {
    margin-left: 21px;
  }

  .page.active {
    width: 62px;
    padding-right: 4px;
    background: linear-gradient(#fff, #eef4f8);
    font-weight: 700;
  }

  .add {
    height: 24px;
    padding: 0 8px 0 0;
    background: #b9d3e4;
    clip-path: polygon(0 0, 100% 0, 66% 100%, 0 100%);
  }

  .browser {
    position: relative;
    display: flex;
    flex-direction: column;
    width: 142px;
    background: #fff;
  }

  .browser-title {
    display: flex;
    justify-content: flex-end;
    gap: 3px;
    height: 27px;
    padding: 1px 3px 0 0;
    box-sizing: border-box;
    background: linear-gradient(#c3d1de, #d9e6f3);
  }

  .browser-title .sys {
    border-color: #8798b0;
    background: linear-gradient(#d3dfeb, #c0d0e0);
  }

  .browser-tabs {
    display: flex;
    height: 26px;
    border-bottom: 1px solid #7f8c9b;
    background: #d9e6f3;
  }

  .browser-tabs .tool {
    height: 22px;
  }

  .browser-tab {
    display: flex;
    align-items: center;
    justify-content: space-between;
    width: 30px;
    border: 1px solid #7f8c9b;
    border-width: 1px 1px 0 0;
    background: linear-gradient(#a9c0f4, #fff);
    color: #345;
  }

  .browser-tab button {
    padding-right: 5px;
    font: 12px/16px "DejaVu Sans", sans-serif;
    color: #7c8aa4;
  }

  .blank-tab {
    width: 27px;
    margin-right: 7px;
    border: 1px solid #7f8c9b;
    border-width: 1px 1px 0 0;
    background: #e3eefa;
  }

  .browser-bar {
    height: 30px;
    border-bottom: 1px solid #777;
    background: #f7f7f7;
  }

  .browser-page {
    flex: 1;
    display: flex;
    justify-content: flex-end;
  }

  .scrollbar {
    display: flex;
    flex-direction: column;
    justify-content: space-between;
    width: 17px;
    padding: 14px 0;
    background: #f0f0f0;
  }

  .scrollbar svg {
    width: 16px;
  }

  .thumb {
    flex: 0 0 75%;
    margin: 6px 1px auto;
    background: #cdcdcd;
  }

  .meter {
    position: absolute;
    right: 0;
    top: 11px;
    width: 8px;
    height: 58px;
    border: 1px solid #333a44;
    border-right: 0;
    border-radius: 3px 0 0 3px;
    background: repeating-linear-gradient(#4cb4ec 0 1px, #4a5460 1px 3px) 4px 28px / 2px 26px no-repeat, #4a5460;
  }

  .ball {
    position: absolute;
    right: -25px;
    top: 167px;
    width: 44px;
    height: 44px;
    padding-left: 4px;
    box-sizing: border-box;
    border: 2px solid #fff;
    border-radius: 50%;
    box-shadow: 0 0 3px 1px #777;
    background: linear-gradient(#ff9c3c, #ee7c10);
    font: 700 11px/40px "Liberation Sans", sans-serif;
    color: #fff;
  }

  .taskbar {
    display: flex;
    height: 40px;
    box-sizing: border-box;
    border-top: 1px solid #3c4654;
    background: linear-gradient(90deg, #8496b0 118px, #a6bedb 119px, #a6bedb calc(100% - 600px), #8596ad calc(100% - 570px));
    box-shadow: inset 0 1px #c8d4e4;
  }

  .launch {
    width: 36px;
    margin-left: 9px;
  }

  .launch + .launch {
    margin: 0 15px 0 21px;
  }

  .launch svg,
  .task svg {
    display: block;
    width: 36px;
    margin: 0 auto;
  }

  .task {
    width: 60px;
    margin-right: 2px;
    border: 1px solid #52627a;
    border-radius: 3px;
    background: linear-gradient(135deg, #d4e0f0, #9fb7d6 60%, #b4c8e2);
    box-shadow: inset 0 0 0 1px #ffffff90;
  }

  .task svg {
    width: 34px;
  }

  .launch + .task {
    margin-left: 2px;
  }

  .stacked {
    width: 53px;
    margin-right: 10px;
    box-shadow: inset 0 0 0 1px #ffffffa0, 3px 0 #b4c8e2, 4px 0 #5f7088, 7px 0 #b4c8e2, 8px 0 #5f7088;
  }

  .current {
    background: linear-gradient(135deg, #fff, #d0deee);
  }

  .tray {
    display: flex;
    align-items: center;
    gap: 8px;
    margin-left: auto;
    color: #fff;
  }

  .tray b {
    display: block;
    font-weight: 400;
    line-height: 17px;
    text-align: center;
  }

  .desk {
    margin-right: -2px;
    opacity: 0.8;
  }

  .library {
    display: flex;
    gap: 4px;
    margin-right: 66px;
    padding-bottom: 10px;
  }

  .more {
    padding-bottom: 22px;
    font-size: 16px;
  }

  .lang {
    margin-left: 3px;
    padding-bottom: 4px;
    font: 12px/16px "Liberation Serif", serif;
  }

  .float {
    width: 10px;
    height: 26px;
  }

  .float svg {
    display: block;
  }

  .temp {
    margin: 0 14px 0 13px;
  }

  .clock {
    margin-left: 13px;
  }

  .show-desktop {
    width: 15px;
    height: 38px;
    margin-left: 4px;
    border: 1px solid #4c5a6c;
    background: linear-gradient(135deg, #c0cad8, #6c7c92);
  }

  .watermark {
    position: absolute;
    right: 5px;
    bottom: 5px;
    width: 206px;
    height: 62px;
    background: #ffffff55;
    pointer-events: none;
  }

  .watermark svg {
    position: absolute;
    width: 206px;
    opacity: 0.7;
  }

  .watermark strong {
    position: absolute;
    right: 20px;
    top: 3px;
    font: 700 29px/32px "Noto Sans CJK SC", sans-serif;
    color: #3cb06c90;
  }

  .watermark em {
    position: absolute;
    right: 4px;
    bottom: 4px;
    font: 14px/18px "Open Sans", sans-serif;
    color: #4c809870;
  }
</style>
